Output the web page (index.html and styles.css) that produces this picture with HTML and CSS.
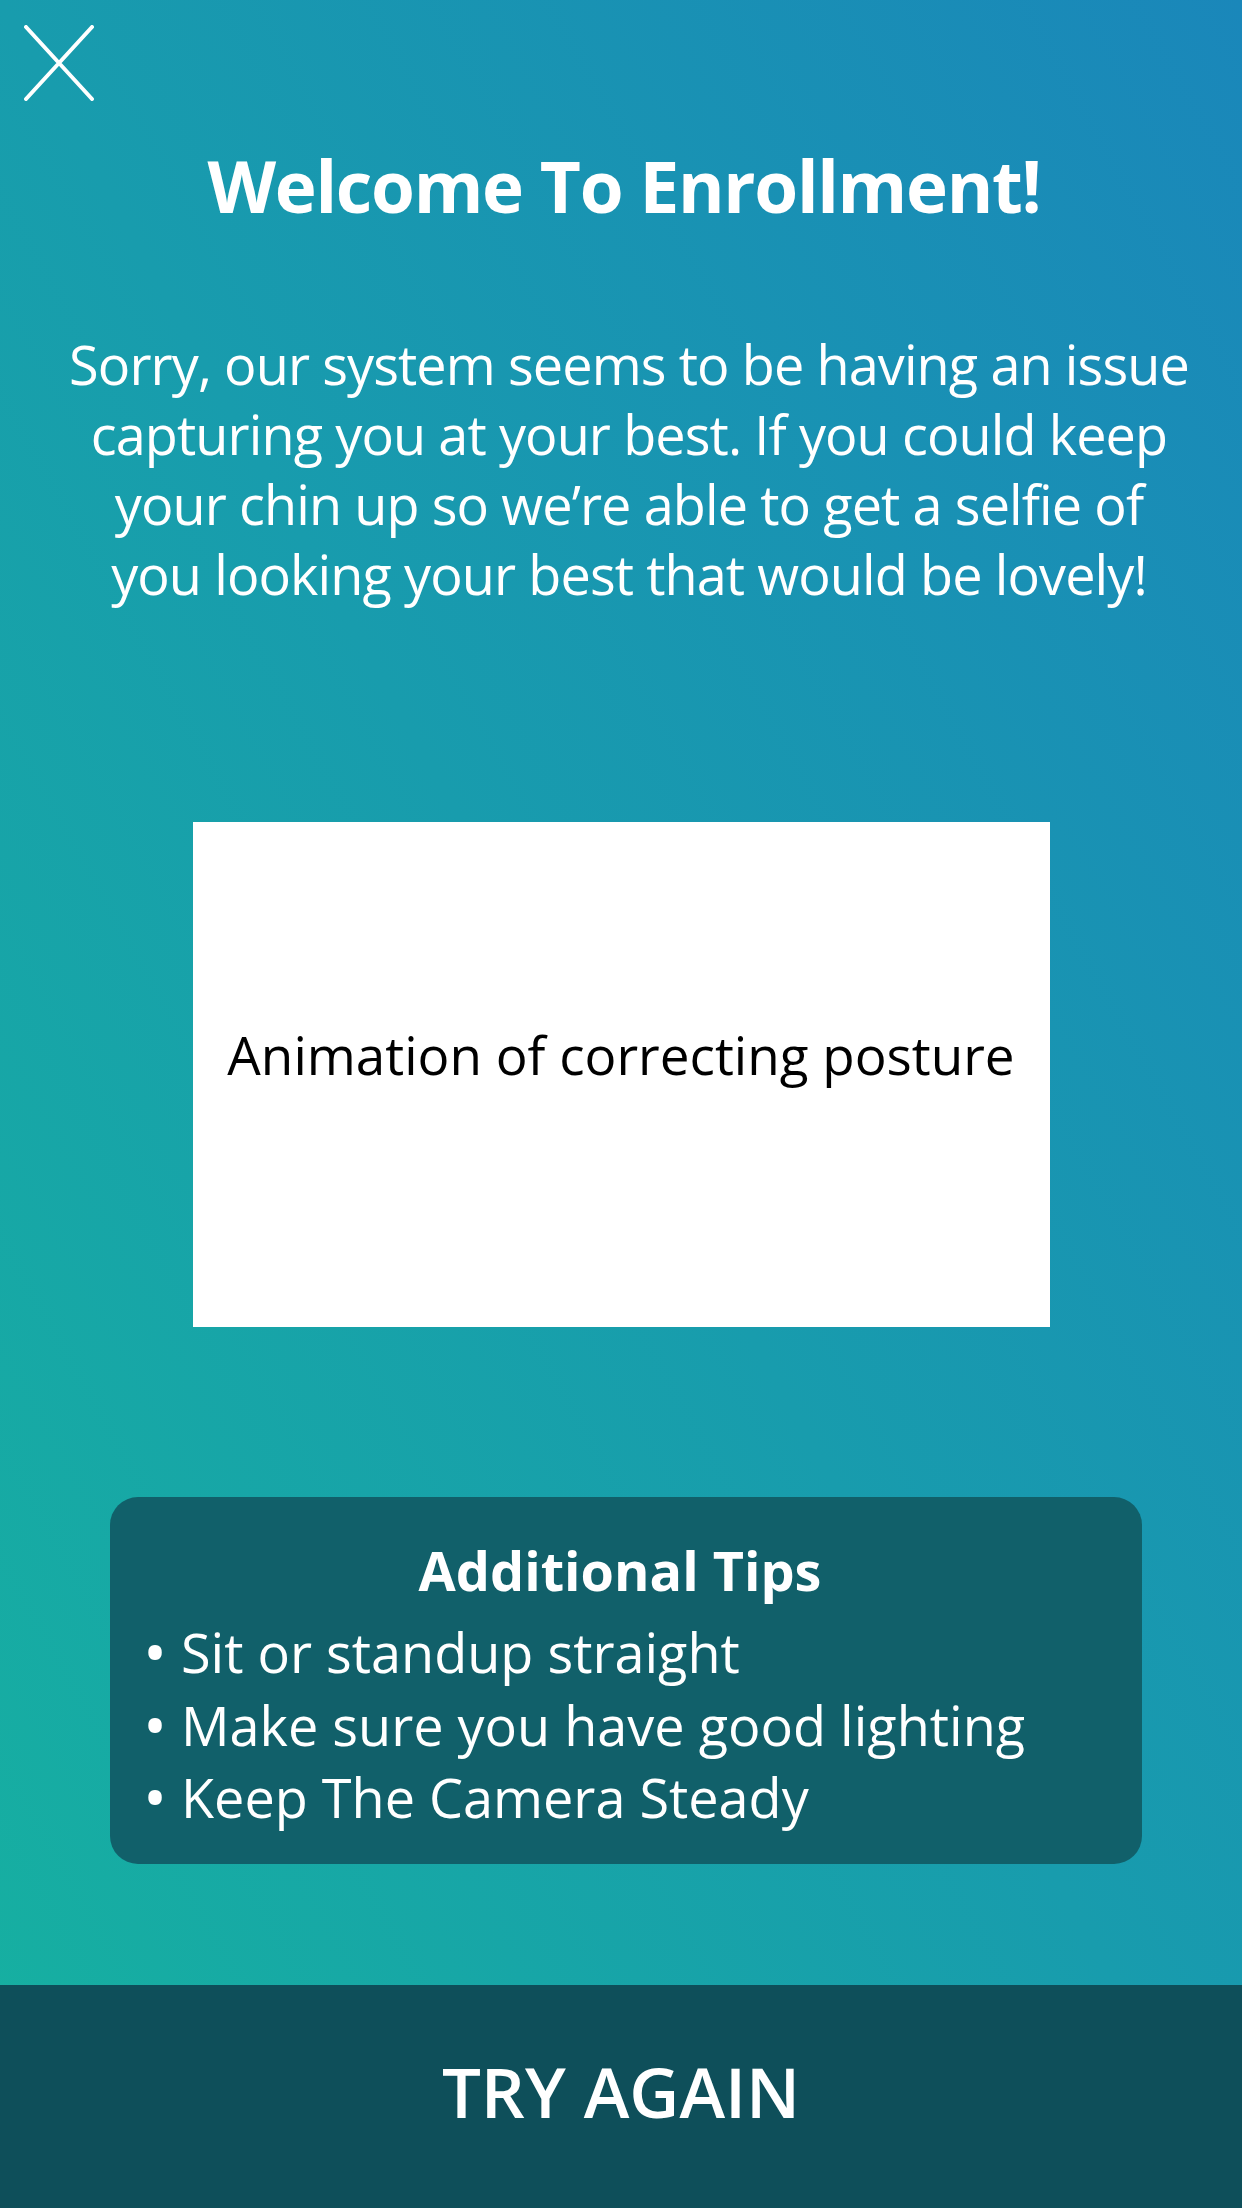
FILE: index.html
```html
<!DOCTYPE html>
<html lang="en">
<head>
<meta charset="utf-8">
<title>Welcome To Enrollment</title>
<link rel="stylesheet" href="styles.css">
</head>
<body>
<div class="screen">
  <header class="topbar">
    <button class="close" aria-label="Close">
      <svg width="70" height="76" viewBox="0 0 70 76" aria-hidden="true">
        <path d="M2 2 L68 74 M68 2 L2 74" stroke="#ffffff" stroke-width="4" stroke-linecap="round" fill="none"/>
      </svg>
    </button>
  </header>

  <h1 class="title">Welcome To Enrollment!</h1>

  <p class="message">Sorry, our system seems to be having an issue<br>capturing you at your best. If you could keep<br>your chin up so we’re able to get a selfie of<br>you looking your best that would be lovely!</p>

  <div class="animation">
    <span class="animation-label">Animation of correcting posture</span>
  </div>

  <section class="tips">
    <h2 class="tips-title">Additional Tips</h2>
    <ul class="tips-list">
      <li>Sit or standup straight</li>
      <li>Make sure you have good lighting</li>
      <li>Keep The Camera Steady</li>
    </ul>
  </section>

  <footer class="cta">
    <button class="cta-button">TRY AGAIN</button>
  </footer>
</div>
</body>
</html>
```
FILE: styles.css
```css
html, body {
  margin: 0;
  padding: 0;
}

body {
  font-family: "Open Sans", "Noto Sans", sans-serif;
  color: #ffffff;
}

.screen {
  width: 1242px;
  height: 2208px;
  display: flex;
  flex-direction: column;
  align-items: center;
  background: linear-gradient(to top right, #16b1a0 0%, #189cad 50%, #1a87ba 100%);
  overflow: hidden;
}

.topbar {
  align-self: stretch;
  display: flex;
  padding: 25px 0 0 24px;
}

.close {
  display: block;
  width: 70px;
  height: 76px;
  padding: 0;
  margin: 0;
  border: 0;
  background: none;
  cursor: pointer;
}

.close svg {
  display: block;
}

.title {
  margin: 45px 0 0 6px;
  font-size: 71px;
  line-height: 80px;
  font-weight: 700;
  letter-spacing: -1.3px;
  text-align: center;
  white-space: nowrap;
}

.message {
  margin: 103px 0 0 16px;
  font-size: 54px;
  line-height: 70px;
  font-weight: 400;
  letter-spacing: -0.9px;
  text-align: center;
  white-space: nowrap;
}

.animation {
  margin-top: 213px;
  width: 857px;
  height: 505px;
  box-sizing: border-box;
  padding-bottom: 40px;
  background: #ffffff;
  display: flex;
  align-items: center;
  justify-content: center;
}

.animation-label {
  color: #000000;
  font-size: 53px;
  white-space: nowrap;
}

.tips {
  margin: 170px 0 0 10px;
  width: 1032px;
  height: 367px;
  box-sizing: border-box;
  padding: 43px 33px 0;
  border-radius: 28px;
  background: #11606a;
}

.tips-title {
  margin: 0 12px 0 0;
  font-size: 54px;
  line-height: 60px;
  font-weight: 700;
  text-align: center;
}

.tips-list {
  list-style: none;
  margin: 16px 0 0;
  padding: 0;
}

.tips-list li {
  display: flex;
  font-size: 54px;
  line-height: 72.5px;
  white-space: nowrap;
}

.tips-list li::before {
  content: "•";
  width: 38px;
  flex: none;
  font-size: 64px;
}

.cta {
  margin-top: auto;
  align-self: stretch;
  height: 223px;
  background: #0e4f5a;
  display: flex;
}

.cta-button {
  flex: 1;
  border: 0;
  margin: 0;
  padding: 0 0 12px;
  background: none;
  color: #ffffff;
  font-family: "Open Sans", "Noto Sans", sans-serif;
  font-size: 69px;
  font-weight: 600;
  cursor: pointer;
}
```
